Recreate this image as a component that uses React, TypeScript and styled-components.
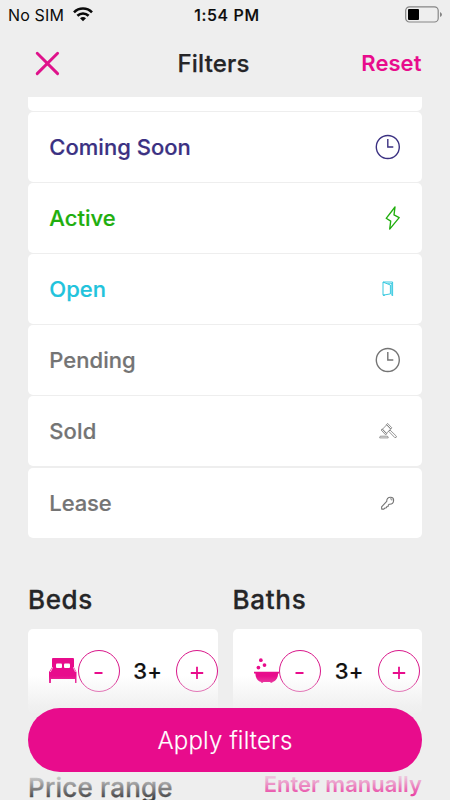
import React from "react";
import styled, { createGlobalStyle } from "styled-components";

const PINK = "#e80c8c";

const GlobalStyle = createGlobalStyle`
  html, body { margin: 0; padding: 0; background: #eeeeee; }
  * { box-sizing: border-box; }
  button { font: inherit; margin: 0; padding: 0; border: 0; background: none; }
`;

const Screen = styled.main`
  position: relative;
  display: flex;
  flex-direction: column;
  width: 450px;
  height: 800px;
  overflow: hidden;
  background: #eeeeee;
  color: #252527;
  font-family: Inter, "Liberation Sans", sans-serif;
`;

const StatusBar = styled.div`
  display: grid;
  grid-template-columns: 1fr auto 1fr;
  align-items: center;
  height: 29px;
  flex: none;
  padding: 0 7px 0 8px;
  color: #0b0b0b;
  font-size: 16px;
  line-height: 20px;
`;

const Carrier = styled.div`
  display: flex;
  align-items: center;
  gap: 9px;
  letter-spacing: 0.15px;
`;

const Clock = styled.div`
  padding-left: 3px;
  font-weight: 500;
  letter-spacing: 0.65px;
  -webkit-text-stroke: 0.2px currentColor;
`;

const Battery = styled.div`
  display: flex;
  justify-content: flex-end;
`;

const Header = styled.header`
  display: grid;
  grid-template-columns: 142.5px 1fr auto;
  align-items: center;
  flex: none;
  height: 67.5px;
  padding: 0.5px 28.5px 0 35px;
`;

const CloseButton = styled.button`
  display: flex;
  width: 25px;
  height: 25px;
`;

const Title = styled.h1`
  margin: 0;
  padding-top: 1px;
  font-size: 24px;
  line-height: 30px;
  font-weight: 500;
  letter-spacing: 0.2px;
  -webkit-text-stroke: 0.25px currentColor;
`;

const TextButton = styled.button<{ $spacing: number }>`
  justify-self: end;
  color: ${PINK};
  font-size: 22px;
  line-height: 28px;
  font-weight: 600;
  letter-spacing: ${(p) => p.$spacing}px;
  white-space: nowrap;
`;

const ResetButton = styled(TextButton)`
  padding-bottom: 1px;
`;

const Content = styled.div`
  flex: 1;
  min-height: 0;
  overflow: hidden;
  padding: 0 28px;
`;

const StatusList = styled.ul`
  display: flex;
  flex-direction: column;
  gap: 1.2px;
  margin: 0;
  padding: 0;
  list-style: none;
`;

const ClippedRow = styled.li`
  height: 14px;
  border-radius: 0 0 5px 5px;
  background: #fff;
`;

const StatusRow = styled.li<{ $color: string }>`
  display: flex;
  align-items: center;
  justify-content: space-between;
  height: 70px;
  padding: 0 21px 0 21.3px;
  border-radius: 5px;
  background: #fff;
  color: ${(p) => p.$color};
  font-size: 22px;
  line-height: 28px;
  font-weight: 500;
  -webkit-text-stroke: 0.2px currentColor;
`;

const RowLabel = styled.span<{ $spacing: number }>`
  letter-spacing: ${(p) => p.$spacing}px;
`;

const IconSlot = styled.span`
  display: flex;
  width: 26px;
  height: 26px;
`;

const Rooms = styled.div`
  display: grid;
  grid-template-columns: 190px 189.5px;
  gap: 14.5px;
  margin-top: 44px;
`;

const SectionTitle = styled.h2<{ $spacing?: number }>`
  margin: 0;
  font-size: 26px;
  line-height: 36px;
  font-weight: 500;
  letter-spacing: ${(p) => p.$spacing ?? 0}px;
  -webkit-text-stroke: 0.3px currentColor;
`;

const Stepper = styled.div`
  display: flex;
  align-items: center;
  height: 84px;
  margin-top: 11.3px;
  padding-left: 21px;
  border-radius: 5px;
  background: #fff;
`;

const RoomIcon = styled.span<{ $width: number }>`
  display: flex;
  flex: none;
  width: ${(p) => p.$width}px;
`;

const RoundButton = styled.button`
  display: flex;
  align-items: center;
  justify-content: center;
  flex: none;
  width: 42px;
  height: 42px;
  border: 1.3px solid #d9178a;
  border-radius: 50%;
  color: ${PINK};
`;

const Count = styled.span`
  width: 56.5px;
  flex: none;
  color: #111;
  text-align: center;
  font-size: 22px;
  font-weight: 500;
  letter-spacing: 0.3px;
  line-height: 28px;
  -webkit-text-stroke: 0.2px currentColor;
`;

const PriceHeader = styled.div`
  display: flex;
  justify-content: space-between;
  align-items: flex-start;
  margin-top: 57.2px;
`;

const Footer = styled.footer`
  position: absolute;
  left: 0;
  right: 0;
  bottom: 0;
  height: 124px;
  padding: 32px 28px 0;
  background: linear-gradient(
    to bottom,
    rgba(238, 238, 238, 0) 0,
    rgba(238, 238, 238, 0.9) 31px,
    #eeeeee 48px,
    #eeeeee 89px,
    rgba(238, 238, 238, 0.82) 101px,
    rgba(238, 238, 238, 0.35) 116px,
    rgba(238, 238, 238, 0.1) 124px
  );
`;

const ApplyButton = styled.button`
  display: block;
  width: 394px;
  height: 64px;
  border-radius: 32px;
  background: ${PINK};
  color: #fff;
  font-size: 24px;
  font-weight: 300;
  line-height: 66px;
  text-align: center;
  letter-spacing: 0.18px;
  -webkit-text-stroke: 0.15px currentColor;
`;

const WifiIcon = () => (
  <svg width="20" height="15" viewBox="0 0 20 15" fill="none" stroke="#0b0b0b" strokeWidth="2.6">
    <path d="M1 5.3C6 .3 14 .3 19 5.3" />
    <path d="M4.400 8.800C7.600 5.700 12.400 5.700 15.600 8.800" />
    <path d="M7 11.300Q10 8.800 13 11.300L10 14.200Z" fill="#0b0b0b" stroke="none" />
  </svg>
);

const BatteryIcon = () => (
  <svg width="38" height="17" viewBox="0 0 38 17">
    <rect x=".7" y=".8" width="32.5" height="15.2" rx="3.8" fill="none" stroke="#858585" strokeWidth="1.2" />
    <rect x="3" y="3" width="11" height="11" rx="1" fill="#000" />
    <path d="M35 6v5q2-1 2-2.500T35 6Z" fill="#858585" />
  </svg>
);

const CloseIcon = () => (
  <svg width="25" height="25" viewBox="0 0 25 25" stroke="#df128b" strokeWidth="2.9" strokeLinecap="round">
    <path d="M2.200 2.200 22.600 22.600M22.600 2.200 2.200 22.600" />
  </svg>
);

const ClockIcon = () => (
  <svg width="26" height="26" viewBox="0 0 26 26" fill="none" stroke="currentColor" strokeWidth="1.4">
    <circle cx="12.800" cy="13" r="11.500" />
    <path d="M12.800 5v8h5.500" />
  </svg>
);

const BoltIcon = () => (
  <svg width="26" height="26" viewBox="0 0 26 26" fill="none" stroke="currentColor" strokeWidth="1.350" strokeLinejoin="round">
    <path d="M20 2 11.200 13.300 15.700 16.100 14.700 24.100 24.200 12.600 19 9.900Z" />
  </svg>
);

const DoorIcon = () => (
  <svg width="26" height="26" viewBox="0 0 26 26" fill="none" stroke="currentColor" strokeWidth=".9">
    <path d="M17.600 20V6H8v13.200l7.400-1.300V9L8.200 6.200M8 19.200h2" />
    <path d="M16.500 7v12.500M12.500 7.500h4.500" strokeWidth=".6" />
  </svg>
);

const GavelIcon = () => (
  <svg width="26" height="26" viewBox="0 0 26 26" fill="none" stroke="currentColor" strokeWidth=".75" strokeLinejoin="round">
    <path d="m7.300 11.400 4.500-4.700 4 4.200-4.500 4.600ZM6.100 12l1.200-1.100 4.500 4.800-1.100 1.200ZM11.400 6.600l1.200-1.200 4.200 4.400-1.100 1.300ZM13.700 13.300l1.300-1.300 6.400 6.200q.4 1.500-1.500 1.500Z" />
    <path d="M4.700 19.900v-.7q.1-1 1.100-1h6.100q1.100 0 1.300 1v.7Z" />
  </svg>
);

const KeyIcon = () => (
  <svg width="26" height="26" viewBox="0 0 26 26" fill="none" stroke="currentColor" strokeWidth="1.1" strokeLinejoin="round">
    <path d="M11.700 11.400c0-2.700 1.300-4.200 3.800-4.200 2.300 0 3.300 1.500 3.100 3.500-.2 2.200-1.900 3.600-4.300 3.500l-1 1-.2 1.300-1.500.2-.1 1.100-1.500.2-1.200 1.100H6.700l-.1-2.300Z" />
    <path d="m15 8.800 1.900.2v1.600" strokeWidth=".8" />
  </svg>
);

const BedIcon = () => (
  <svg width="28" height="26" viewBox="0 0 28 26">
    <path fill={PINK} d="M4 0h20q1 0 1 1v8.300l2.500 4.800V25H26v-4H2v4H0V14l3-4.700V1q0-1 1-1Z" />
    <path d="M3.300 9v1.200L1.300 14M24.700 9v1.200l1.800 3.800" fill="none" stroke="#fff" strokeWidth=".7" />
    <rect x="7" y="5.600" width="6" height="4.500" rx="1" fill="#fff" />
    <rect x="15" y="5.600" width="6" height="4.500" rx="1" fill="#fff" />
  </svg>
);

const BathIcon = () => (
  <svg width="26" height="26" viewBox="0 0 26 26" fill={PINK}>
    <circle cx="7" cy="2" r="1.900" />
    <circle cx="10.700" cy="7" r="1.900" />
    <circle cx="4.500" cy="9.500" r="1.900" />
    <path d="M0 13.800h26v1.800h-1.400c-.1 4-1.800 7-4.300 8l-1.600.6v.9h-2v-.9H9.300v.9h-2v-.9l-1.600-.6c-2.500-1-4.200-4-4.300-8H0Z" />
  </svg>
);

const MinusIcon = () => (
  <svg width="16" height="16" viewBox="0 0 16 16" stroke={PINK} strokeWidth="2">
    <path d="M3.500 10h8" />
  </svg>
);

const PlusIcon = () => (
  <svg width="16" height="16" viewBox="0 0 16 16" stroke={PINK} strokeWidth="1.800">
    <path d="M1.800 10h12.400M8 3.800v12.200" />
  </svg>
);

const statuses = [
  { label: "Coming Soon", color: "#3b3182", spacing: 0.03, Icon: ClockIcon },
  { label: "Active", color: "#20ae0d", spacing: 0, Icon: BoltIcon },
  { label: "Open", color: "#21c3dc", spacing: 0, Icon: DoorIcon },
  { label: "Pending", color: "#747474", spacing: 0.05, Icon: ClockIcon },
  { label: "Sold", color: "#747474", spacing: 0.1, Icon: GavelIcon },
  { label: "Lease", color: "#747474", spacing: -0.1, Icon: KeyIcon },
];

const rooms = [
  { label: "Beds", width: 28.5, spacing: 0.6, Icon: BedIcon },
  { label: "Baths", width: 25.5, spacing: 0.7, Icon: BathIcon },
];

export default function App() {
  return (
    <>
      <GlobalStyle />
      <Screen>
        <StatusBar>
          <Carrier>No SIM <WifiIcon /></Carrier>
          <Clock>1:54 PM</Clock>
          <Battery><BatteryIcon /></Battery>
        </StatusBar>
        <Header>
          <CloseButton aria-label="Close"><CloseIcon /></CloseButton>
          <Title>Filters</Title>
          <ResetButton $spacing={0.05}>Reset</ResetButton>
        </Header>
        <Content>
          <StatusList>
            <ClippedRow />
            {statuses.map(({ label, color, spacing, Icon }) => (
              <StatusRow key={label} $color={color}>
                <RowLabel $spacing={spacing}>{label}</RowLabel>
                <IconSlot><Icon /></IconSlot>
              </StatusRow>
            ))}
          </StatusList>
          <Rooms>
            {rooms.map(({ label, width, spacing, Icon }) => (
              <section key={label}>
                <SectionTitle $spacing={spacing}>{label}</SectionTitle>
                <Stepper>
                  <RoomIcon $width={width}><Icon /></RoomIcon>
                  <RoundButton aria-label={`Fewer ${label}`}><MinusIcon /></RoundButton>
                  <Count>3+</Count>
                  <RoundButton aria-label={`More ${label}`}><PlusIcon /></RoundButton>
                </Stepper>
              </section>
            ))}
          </Rooms>
          <PriceHeader>
            <SectionTitle $spacing={0.2}>Price range</SectionTitle>
            <TextButton $spacing={0}>Enter manually</TextButton>
          </PriceHeader>
        </Content>
        <Footer>
          <ApplyButton>Apply filters</ApplyButton>
        </Footer>
      </Screen>
    </>
  );
}
